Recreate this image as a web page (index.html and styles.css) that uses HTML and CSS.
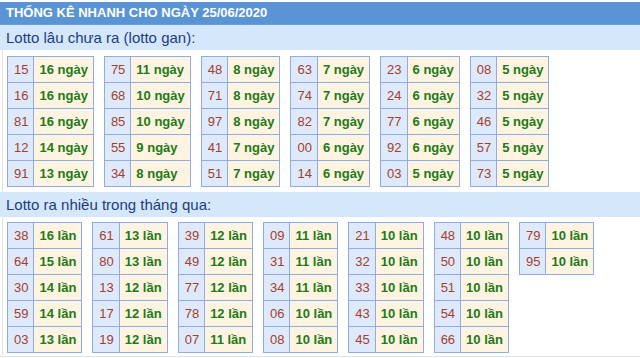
FILE: index.html
```html
<!DOCTYPE html>
<html lang="vi">
<head>
<meta charset="utf-8">
<title>Thống kê nhanh</title>
<link rel="stylesheet" href="styles.css">
</head>
<body>
<div class="page">
  <div class="title">THỐNG KÊ NHANH CHO NGÀY 25/06/2020</div>
  <div class="band">Lotto lâu chưa ra (lotto gan):</div>
  <div class="body body-first">
    <table class="tk"><tr><td class="n">15</td><td class="v">16 ngày</td></tr><tr><td class="n">16</td><td class="v">16 ngày</td></tr><tr><td class="n">81</td><td class="v">16 ngày</td></tr><tr><td class="n">12</td><td class="v">14 ngày</td></tr><tr><td class="n">91</td><td class="v">13 ngày</td></tr></table>
    <table class="tk"><tr><td class="n">75</td><td class="v">11 ngày</td></tr><tr><td class="n">68</td><td class="v">10 ngày</td></tr><tr><td class="n">85</td><td class="v">10 ngày</td></tr><tr><td class="n">55</td><td class="v">9 ngày</td></tr><tr><td class="n">34</td><td class="v">8 ngày</td></tr></table>
    <table class="tk"><tr><td class="n">48</td><td class="v">8 ngày</td></tr><tr><td class="n">71</td><td class="v">8 ngày</td></tr><tr><td class="n">97</td><td class="v">8 ngày</td></tr><tr><td class="n">41</td><td class="v">7 ngày</td></tr><tr><td class="n">51</td><td class="v">7 ngày</td></tr></table>
    <table class="tk"><tr><td class="n">63</td><td class="v">7 ngày</td></tr><tr><td class="n">74</td><td class="v">7 ngày</td></tr><tr><td class="n">82</td><td class="v">7 ngày</td></tr><tr><td class="n">00</td><td class="v">6 ngày</td></tr><tr><td class="n">14</td><td class="v">6 ngày</td></tr></table>
    <table class="tk"><tr><td class="n">23</td><td class="v">6 ngày</td></tr><tr><td class="n">24</td><td class="v">6 ngày</td></tr><tr><td class="n">77</td><td class="v">6 ngày</td></tr><tr><td class="n">92</td><td class="v">6 ngày</td></tr><tr><td class="n">03</td><td class="v">5 ngày</td></tr></table>
    <table class="tk"><tr><td class="n">08</td><td class="v">5 ngày</td></tr><tr><td class="n">32</td><td class="v">5 ngày</td></tr><tr><td class="n">46</td><td class="v">5 ngày</td></tr><tr><td class="n">57</td><td class="v">5 ngày</td></tr><tr><td class="n">73</td><td class="v">5 ngày</td></tr></table>
  </div>
  <div class="band">Lotto ra nhiều trong tháng qua:</div>
  <div class="body body-second">
    <table class="tk"><tr><td class="n">38</td><td class="v">16 lần</td></tr><tr><td class="n">64</td><td class="v">15 lần</td></tr><tr><td class="n">30</td><td class="v">14 lần</td></tr><tr><td class="n">59</td><td class="v">14 lần</td></tr><tr><td class="n">03</td><td class="v">13 lần</td></tr></table>
    <table class="tk"><tr><td class="n">61</td><td class="v">13 lần</td></tr><tr><td class="n">80</td><td class="v">13 lần</td></tr><tr><td class="n">13</td><td class="v">12 lần</td></tr><tr><td class="n">17</td><td class="v">12 lần</td></tr><tr><td class="n">19</td><td class="v">12 lần</td></tr></table>
    <table class="tk"><tr><td class="n">39</td><td class="v">12 lần</td></tr><tr><td class="n">49</td><td class="v">12 lần</td></tr><tr><td class="n">77</td><td class="v">12 lần</td></tr><tr><td class="n">78</td><td class="v">12 lần</td></tr><tr><td class="n">07</td><td class="v">11 lần</td></tr></table>
    <table class="tk"><tr><td class="n">09</td><td class="v">11 lần</td></tr><tr><td class="n">31</td><td class="v">11 lần</td></tr><tr><td class="n">34</td><td class="v">11 lần</td></tr><tr><td class="n">06</td><td class="v">10 lần</td></tr><tr><td class="n">08</td><td class="v">10 lần</td></tr></table>
    <table class="tk"><tr><td class="n">21</td><td class="v">10 lần</td></tr><tr><td class="n">32</td><td class="v">10 lần</td></tr><tr><td class="n">33</td><td class="v">10 lần</td></tr><tr><td class="n">43</td><td class="v">10 lần</td></tr><tr><td class="n">45</td><td class="v">10 lần</td></tr></table>
    <table class="tk"><tr><td class="n">48</td><td class="v">10 lần</td></tr><tr><td class="n">50</td><td class="v">10 lần</td></tr><tr><td class="n">51</td><td class="v">10 lần</td></tr><tr><td class="n">54</td><td class="v">10 lần</td></tr><tr><td class="n">66</td><td class="v">10 lần</td></tr></table>
    <table class="tk"><tr><td class="n">79</td><td class="v">10 lần</td></tr><tr><td class="n">95</td><td class="v">10 lần</td></tr></table>
  </div>
</div>
</body>
</html>
```
FILE: styles.css
```css
html, body {
  margin: 0;
  padding: 0;
  background: #ffffff;
}
.page {
  margin-top: 2px;
  font-family: "Liberation Sans", Arial, sans-serif;
  width: 640px;
  height: 355px;
  box-sizing: border-box;
  border-bottom: 1px solid #e2e2e2;
}
.title {
  height: 22px;
  line-height: 22px;
  background: #5b94d4;
  color: #ffffff;
  font-size: 13px;
  font-weight: bold;
  padding-left: 6px;
  border-bottom: 1px solid #6c9fd8;
}
.band {
  height: 25px;
  line-height: 25px;
  background: #d4e7fb;
  color: #1d3d80;
  font-size: 15px;
  padding-left: 6px;
}
.body {
  display: flex;
  align-items: flex-start;
  gap: 10px;
  margin-left: 2px;
  padding-left: 4px;
  border-left: 1px solid #e2e2e2;
}
.body-first {
  padding-top: 6px;
  padding-bottom: 5px;
}
.body-second {
  padding-top: 5px;
  padding-bottom: 2px;
}
.tk {
  border-collapse: collapse;
  border: 1px solid #8fade0;
  font-size: 13px;
}
.tk td {
  border: 1px solid #8fade0;
  height: 25px;
  line-height: 25px;
  padding: 0 5px;
  box-sizing: border-box;
  white-space: nowrap;
}
.tk .n {
  background: #deeafc;
  color: #a3402b;
  text-align: center;
  padding: 0 5px 0 6px;
}
.tk .v {
  background: #fff4e2;
  color: #217a16;
  font-weight: bold;
}
```
